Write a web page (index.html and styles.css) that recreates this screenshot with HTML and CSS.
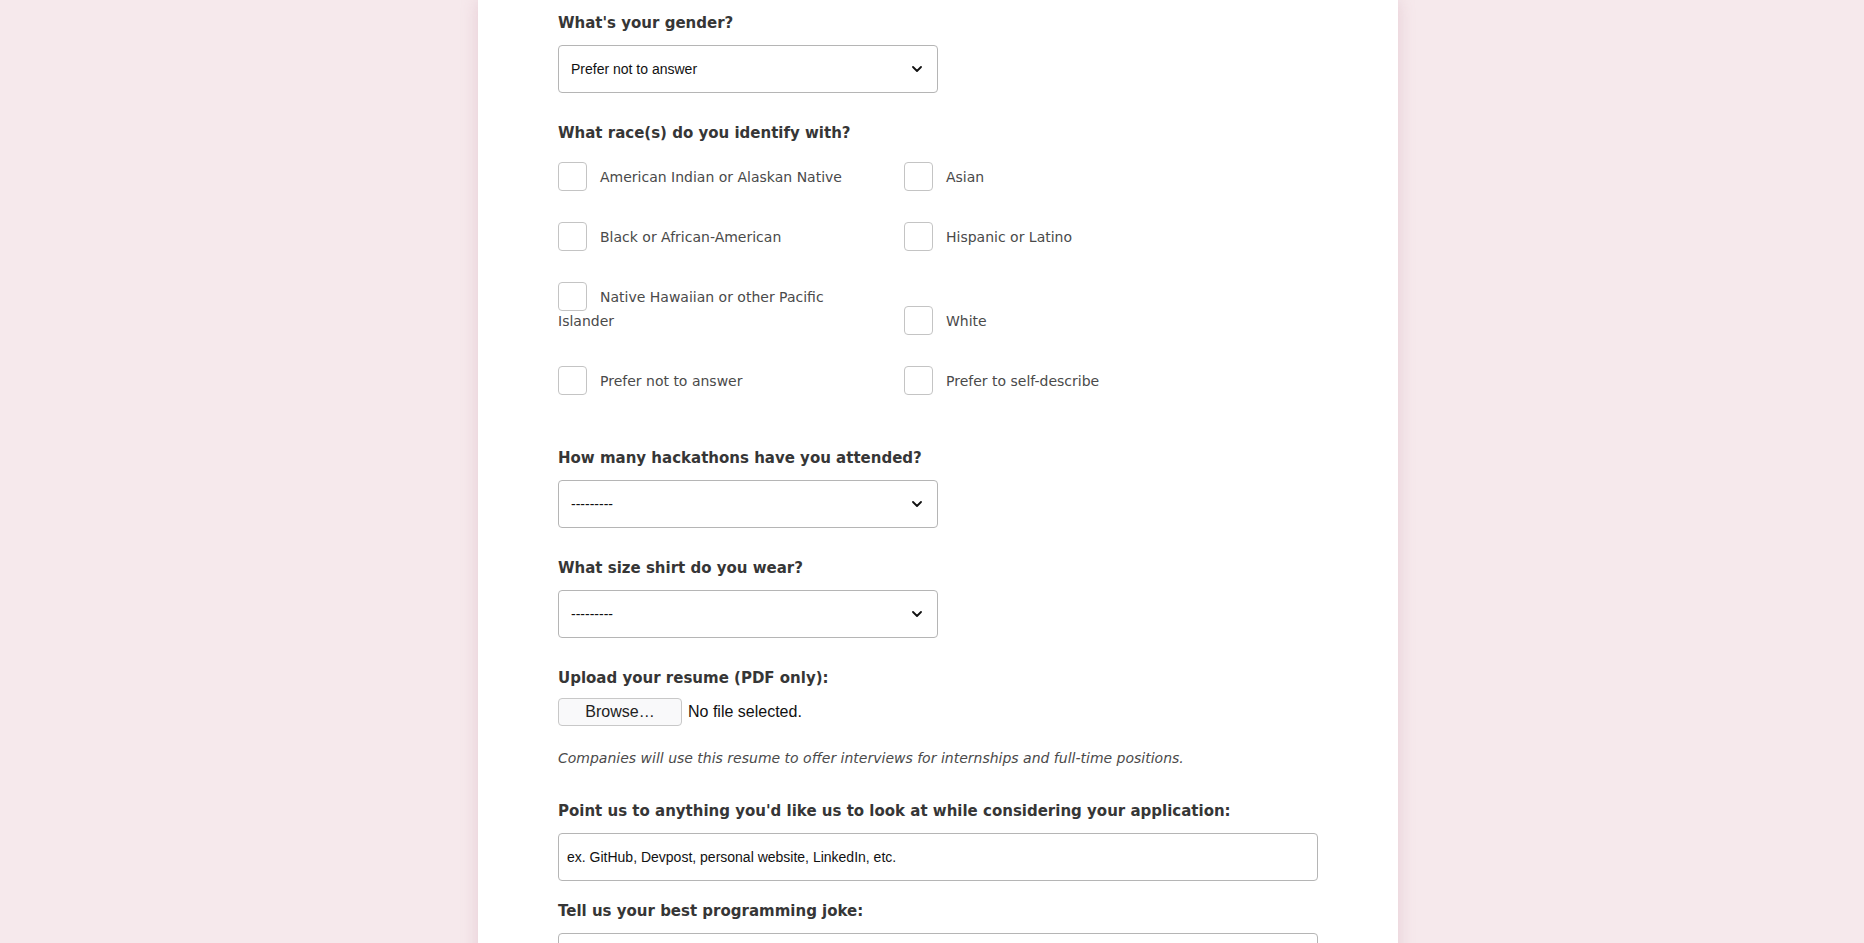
FILE: index.html
```html
<!DOCTYPE html>
<html lang="en">
<head>
<meta charset="utf-8">
<title>Application</title>
<link rel="stylesheet" href="styles.css">
</head>
<body>
<main class="card">
  <form class="form">
    <div class="field">
      <label class="label">What's your gender?</label>
      <div class="select">
        <select><option>Prefer not to answer</option></select>
        <svg class="chevron" width="10" height="6" viewBox="0 0 10 6"><polyline points="1,1 5,5 9,1" fill="none" stroke="#111" stroke-width="1.8" stroke-linecap="round" stroke-linejoin="round"/></svg>
      </div>
    </div>

    <div class="field field-race">
      <label class="label label-race">What race(s) do you identify with?</label>
      <div class="checks">
        <label class="check"><input type="checkbox">American Indian or Alaskan Native</label>
        <label class="check"><input type="checkbox">Asian</label>
        <label class="check"><input type="checkbox">Black or African-American</label>
        <label class="check"><input type="checkbox">Hispanic or Latino</label>
        <label class="check"><input type="checkbox">Native Hawaiian or other Pacific Islander</label>
        <label class="check"><input type="checkbox">White</label>
        <label class="check"><input type="checkbox">Prefer not to answer</label>
        <label class="check"><input type="checkbox">Prefer to self-describe</label>
      </div>
    </div>

    <div class="field">
      <label class="label">How many hackathons have you attended?</label>
      <div class="select">
        <select><option>---------</option></select>
        <svg class="chevron" width="10" height="6" viewBox="0 0 10 6"><polyline points="1,1 5,5 9,1" fill="none" stroke="#111" stroke-width="1.8" stroke-linecap="round" stroke-linejoin="round"/></svg>
      </div>
    </div>

    <div class="field field-size">
      <label class="label">What size shirt do you wear?</label>
      <div class="select">
        <select><option>---------</option></select>
        <svg class="chevron" width="10" height="6" viewBox="0 0 10 6"><polyline points="1,1 5,5 9,1" fill="none" stroke="#111" stroke-width="1.8" stroke-linecap="round" stroke-linejoin="round"/></svg>
      </div>
    </div>

    <div class="field field-upload">
      <label class="label label-upload">Upload your resume (PDF only):</label>
      <div class="file">
        <button type="button" class="file-btn">Browse…</button>
        <span class="file-name">No file selected.</span>
      </div>
      <p class="help">Companies will use this resume to offer interviews for internships and full-time positions.</p>
    </div>

    <div class="field field-text">
      <label class="label">Point us to anything you'd like us to look at while considering your application:</label>
      <input class="input" type="text" placeholder="ex. GitHub, Devpost, personal website, LinkedIn, etc.">
    </div>

    <div class="field field-text">
      <label class="label">Tell us your best programming joke:</label>
      <textarea class="textarea"></textarea>
    </div>
  </form>
</main>
</body>
</html>
```

FILE: styles.css
```css
html, body {
  margin: 0;
  padding: 0;
  overflow: hidden;
  background: #f6e9ec;
}

body {
  font-family: "DejaVu Sans", sans-serif;
  color: #4a4a4a;
  height: 943px;
}

.card {
  margin-left: 478px;
  width: 920px;
  min-height: 1200px;
  background: #ffffff;
  box-shadow: 0 0 16px rgba(190, 130, 150, 0.28);
  box-sizing: border-box;
  padding: 13px 80px 0 80px;
}

.form {
  display: flex;
  flex-direction: column;
}

.field {
  display: flex;
  flex-direction: column;
  align-items: flex-start;
  margin-bottom: 30px;
}

.label {
  display: block;
  font-family: "DejaVu Sans", sans-serif;
  font-weight: 700;
  font-size: 15px;
  line-height: 20px;
  color: #363636;
  margin-bottom: 12px;
}

.label-race {
  margin-bottom: 22px;
}

.field-race {
  margin-bottom: 55px;
}

.checks {
  display: grid;
  grid-template-columns: 310px 310px;
  column-gap: 36px;
  row-gap: 36px;
  align-items: end;
}

.check {
  display: block;
  font-size: 14px;
  line-height: 24px;
  color: #4a4a4a;
}

.check input {
  -webkit-appearance: none;
  appearance: none;
  display: inline-block;
  width: 29px;
  height: 29px;
  box-sizing: border-box;
  border: 1px solid #c4c4c4;
  border-radius: 4px;
  background: #fff;
  margin: -5px 13px -2px 0;
  vertical-align: middle;
}

.select {
  position: relative;
  width: 380px;
  height: 48px;
}

.select select {
  -webkit-appearance: none;
  appearance: none;
  width: 100%;
  height: 48px;
  box-sizing: border-box;
  border: 1px solid #b5b5b5;
  border-radius: 4px;
  background: #fff;
  padding: 0 36px 0 12px;
  font-family: "Liberation Sans", Arial, sans-serif;
  font-size: 14px;
  color: #111;
  outline: none;
}

.chevron {
  position: absolute;
  right: 16px;
  top: 21px;
  pointer-events: none;
}

.label-upload {
  margin-bottom: 10px;
}

.field-upload {
  margin-bottom: 31px;
}

.file {
  display: flex;
  align-items: center;
  gap: 6px;
  height: 28px;
}

.file-btn {
  width: 124px;
  height: 28px;
  box-sizing: border-box;
  border: 1px solid #c8c8c8;
  border-radius: 4px;
  background: #f9f9fa;
  font-family: "Liberation Sans", Arial, sans-serif;
  font-size: 16px;
  color: #222;
  padding: 0;
}

.file-name {
  font-family: "Liberation Sans", Arial, sans-serif;
  font-size: 16px;
  color: #111;
}

.help {
  margin: 20px 0 0 0;
  font-size: 14px;
  line-height: 24px;
  font-style: italic;
  color: #4a4a4a;
}

.field-text {
  align-items: stretch;
  margin-bottom: 20px;
}

.input {
  height: 48px;
  box-sizing: border-box;
  border: 1px solid #b5b5b5;
  border-radius: 4px;
  padding: 0 8px;
  font-family: "Liberation Sans", Arial, sans-serif;
  font-size: 14px;
  color: #111;
  outline: none;
}

.input::placeholder {
  color: #111;
  opacity: 1;
}

.textarea {
  height: 120px;
  box-sizing: border-box;
  border: 1px solid #b5b5b5;
  border-radius: 4px;
  padding: 8px;
  font-family: "Liberation Sans", Arial, sans-serif;
  font-size: 14px;
  resize: none;
  outline: none;
}
```
